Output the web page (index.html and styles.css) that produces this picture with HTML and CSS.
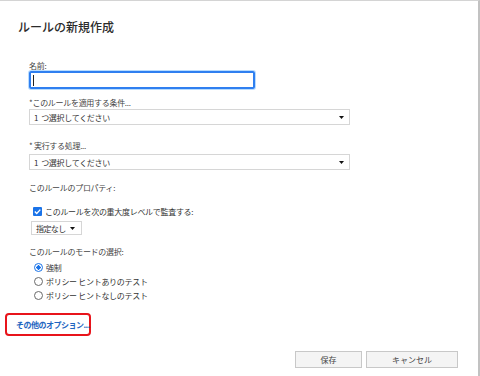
FILE: index.html
```html
<!DOCTYPE html>
<html lang="ja">
<head>
  <meta charset="UTF-8">
  <meta name="viewport" content="width=device-width, initial-scale=1.0">
  <title>ルールの新規作成</title>
  <link rel="stylesheet" href="styles.css">
</head>
<body>

  <div class="dialog">
    <h1 class="title">ルールの新規作成</h1>

    <div class="form">
      <div class="label label-name">名前:</div>
      <div class="input"><span class="caret"></span></div>

      <div class="label label-cond">*このルールを適用する条件...</div>
      <div class="select wide">
        <span><span class="num">1</span>つ選択してください</span>
        <svg class="arrow" width="5" height="3" viewBox="0 0 5 3"><path d="M0 0H5L2.5 3Z" fill="#111"/></svg>
      </div>

      <div class="label label-action">* 実行する処理...</div>
      <div class="select wide">
        <span><span class="num">1</span>つ選択してください</span>
        <svg class="arrow" width="5" height="3" viewBox="0 0 5 3"><path d="M0 0H5L2.5 3Z" fill="#111"/></svg>
      </div>

      <div class="label label-props">このルールのプロパティ:</div>

      <div class="check-row">
        <span class="checkbox">
          <svg width="9" height="9" viewBox="0 0 9 9"><path d="M1.8 4.6L3.7 6.5L7.3 2.6" fill="none" stroke="#fff" stroke-width="1.4"/></svg>
        </span>
        <span>このルールを次の重大度レベルで監査する:</span>
      </div>
      <div class="select small">
        <span>指定なし</span>
        <svg class="arrow" width="5" height="3" viewBox="0 0 5 3"><path d="M0 0H5L2.5 3Z" fill="#111"/></svg>
      </div>

      <div class="label label-mode">このルールのモードの選択:</div>
      <div class="radios">
        <div class="radio-row"><span class="radio checked"></span><span>強制</span></div>
        <div class="radio-row"><span class="radio"></span><span>ポリシー ヒントありのテスト</span></div>
        <div class="radio-row"><span class="radio"></span><span>ポリシー ヒントなしのテスト</span></div>
      </div>
    </div>

    <div class="more">
      <a class="more-link" href="#">その他のオプション...</a>
    </div>

    <div class="buttons">
      <button class="btn save">保存</button>
      <button class="btn cancel">キャンセル</button>
    </div>
  </div>

</body>
</html>
```

FILE: styles.css
```css
/* General Styles */
body {
  margin: 0;
  padding: 0;
  background-color: #fff;
  font-family: "Noto Sans CJK JP", "Noto Sans", sans-serif;
  color: #3a3a3a;
}

.dialog {
  width: 480px;
  height: 376px;
  box-sizing: border-box;
  border-top: 1px solid #d4d4d4;
  border-right: 2px solid #c2c2c2;
}

.title {
  margin: 19px 0 0 18px;
  font-size: 12px;
  line-height: 14px;
  font-weight: 500;
  color: #2b2b2b;
}

.form {
  padding-left: 29px;
}

.label {
  font-size: 8px;
  line-height: 10px;
  letter-spacing: -0.3px;
  color: #444;
}

.label-name { margin-top: 27px; }
.label-cond { margin-top: 9px; }
.label-action { margin-top: 16px; }
.label-props { margin-top: 13px; }
.label-mode { margin-top: 12px; }

/* Name input */
.input {
  width: 226px;
  height: 18px;
  box-sizing: border-box;
  border: 2px solid #2f7ff0;
  border-radius: 2px;
  box-shadow: 0 0 0 1px #b8dcff;
  padding: 2px 0 0 2px;
}

.caret {
  display: block;
  width: 1px;
  height: 11px;
  background-color: #222;
}

/* Dropdowns */
.select {
  display: flex;
  align-items: center;
  justify-content: space-between;
  box-sizing: border-box;
  border: 1px solid #d6d6d6;
  font-size: 8px;
  letter-spacing: -0.3px;
  color: #333;
  white-space: nowrap;
}

.select .num {
  margin-right: 3px;
}

.select.wide {
  width: 321px;
  height: 16px;
  margin-top: 1px;
  padding: 0 5px 0 4px;
}

.label-action + .select.wide { margin-top: 3px; }

.select.small {
  width: 51px;
  height: 14px;
  margin: 3px 0 0 2px;
  padding: 0 6px 0 4px;
  letter-spacing: -0.6px;
}

.arrow {
  display: block;
  flex-shrink: 0;
}

/* Checkbox */
.check-row {
  display: flex;
  align-items: center;
  gap: 3px;
  height: 14px;
  margin: 11px 0 0 4px;
  font-size: 8px;
  letter-spacing: -0.3px;
  color: #333;
}

.checkbox {
  display: block;
  width: 9px;
  height: 9px;
  border-radius: 1px;
  background-color: #1a73e8;
}

.checkbox svg {
  display: block;
}

/* Radios */
.radios {
  margin: 3px 0 0 5px;
}

.radio-row {
  display: flex;
  align-items: center;
  gap: 3px;
  height: 14px;
  font-size: 8px;
  letter-spacing: -0.3px;
  color: #333;
}

.radio {
  display: block;
  width: 9px;
  height: 9px;
  box-sizing: border-box;
  border: 1px solid #6a6a6a;
  border-radius: 50%;
}

.radio.checked {
  border: 1.5px solid #1a73e8;
  background: radial-gradient(circle, #1a73e8 0 2px, #fff 2.3px);
}

/* More options link */
.more {
  width: 86px;
  height: 23px;
  box-sizing: border-box;
  margin: 11px 0 0 5px;
  border: 2px solid #e8141b;
  border-radius: 4px;
  display: flex;
  align-items: center;
  padding-left: 9px;
  white-space: nowrap;
}

.more-link {
  font-size: 8px;
  font-weight: bold;
  letter-spacing: -0.5px;
  color: #1f66c1;
  text-decoration: none;
}

/* Footer buttons */
.buttons {
  display: flex;
  justify-content: flex-end;
  gap: 4px;
  margin-top: 15px;
  padding-right: 20px;
}

.btn {
  height: 17px;
  padding: 0;
  box-sizing: border-box;
  border: 1px solid #c8c8c8;
  background-color: #f4f4f4;
  font-family: "Noto Sans CJK JP", "Noto Sans", sans-serif;
  font-size: 8px;
  color: #444;
}

.btn.save { width: 67px; }
.btn.cancel { width: 92px; }
```
